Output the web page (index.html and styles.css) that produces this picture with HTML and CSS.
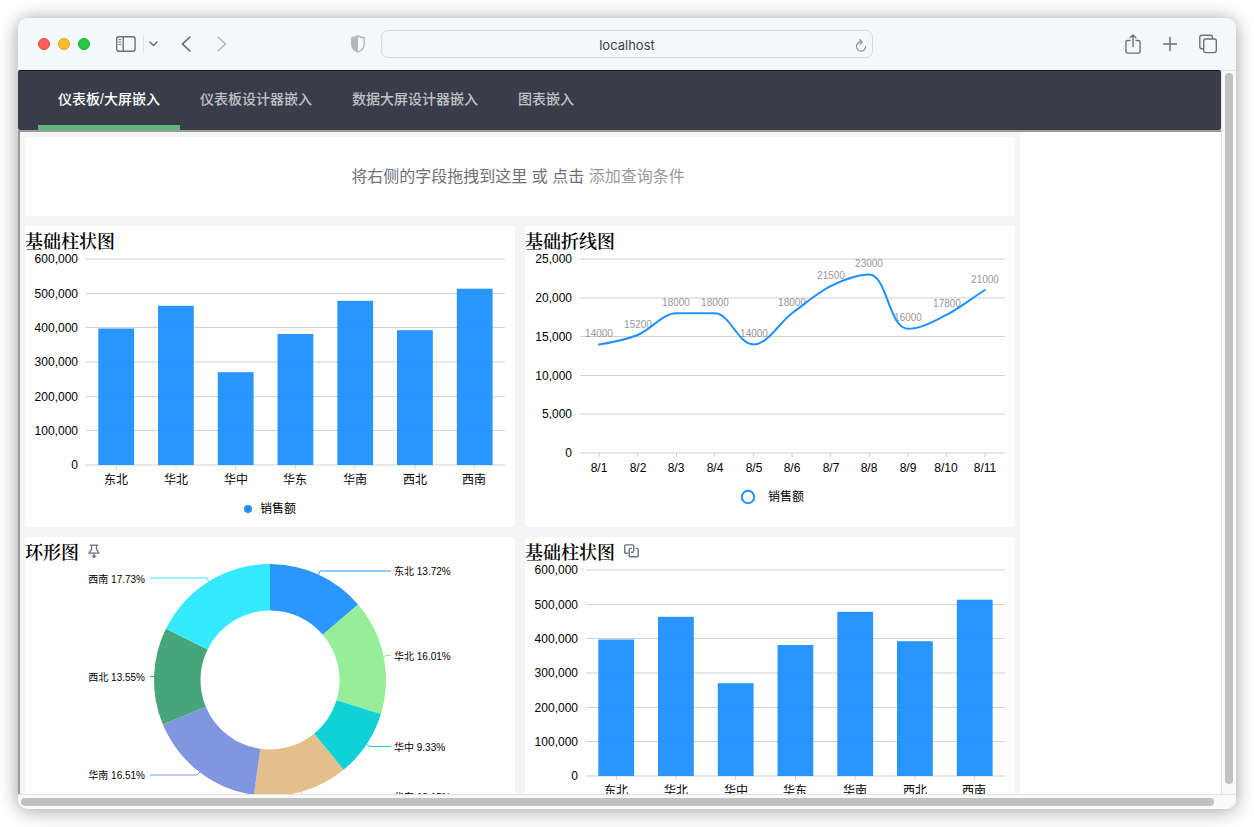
FILE: index.html
```html
<!DOCTYPE html>
<html lang="zh-CN">
<head>
<meta charset="utf-8">
<title>仪表板/大屏嵌入</title>
<link rel="stylesheet" href="styles.css">
</head>
<body>
<div class="window">
  <header class="toolbar">
    <div class="tools tools-left">
      <div class="lights"><span class="light red"></span><span class="light yellow"></span><span class="light green"></span></div>
      <button class="tool sidebar" aria-label="Sidebar"><svg width="20" height="18" viewBox="0 0 20 18"><g fill="none" stroke="#6c7074" stroke-width="1.4"><rect x="0.7" y="1.7" width="18.4" height="14.6" rx="2.2"/><path d="M7.2 2v14"/><path d="M2.6 4.6h2.6M2.6 7h2.6M2.6 9.4h2.6" stroke-width="1"/></g></svg></button>
      <span class="divider"></span>
      <button class="tool menu" aria-label="Tab groups"><svg width="9" height="6" viewBox="0 0 9 6"><path d="M1 1l3.5 3.5L8 1" fill="none" stroke="#6c7074" stroke-width="1.5" stroke-linecap="round" stroke-linejoin="round"/></svg></button>
      <button class="tool back" aria-label="Back"><svg width="10" height="16" viewBox="0 0 10 16"><path d="M9 1L1.4 8L9 15" fill="none" stroke="#5f6367" stroke-width="1.6" stroke-linecap="round" stroke-linejoin="round"/></svg></button>
      <button class="tool forward" aria-label="Forward"><svg width="10" height="16" viewBox="0 0 10 16"><path d="M1 1l7.6 7L1 15" fill="none" stroke="#b4b8bb" stroke-width="1.6" stroke-linecap="round" stroke-linejoin="round"/></svg></button>
      <button class="tool shield" aria-label="Privacy report"><svg width="14" height="18" viewBox="0 0 14 18"><path d="M7 .8C5.2 2 3 2.7.8 2.8V10c0 3.400 2.800 5.600 6.200 7.200C10.400 15.600 13.200 13.400 13.200 10V2.800C11 2.700 8.800 2 7 .8z" fill="none" stroke="#b2b7ba" stroke-width="1.4" stroke-linejoin="round"/><path d="M7 .8C5.200 2 3 2.700.8 2.800V10c0 3.400 2.800 5.600 6.200 7.200z" fill="#b2b7ba"/></svg></button>
    </div>
    <div class="address">
      <input class="url" type="text" aria-label="Address" value="localhost">
      <button class="tool reload" aria-label="Reload"><svg width="12" height="13" viewBox="0 0 12 13"><path d="M6.400 2.900A4.600 4.600 0 1 0 10.600 7.400" fill="none" stroke="#8f9396" stroke-width="1.2" stroke-linecap="round"/><path d="M4.700.7l2.500 2.300l-2.300 2.300" fill="none" stroke="#8f9396" stroke-width="1.200" stroke-linecap="round" stroke-linejoin="round"/></svg></button>
    </div>
    <div class="tools tools-right">
      <button class="tool" aria-label="Share"><svg width="16" height="20" viewBox="0 0 16 20"><g fill="none" stroke="#6c7074" stroke-width="1.400" stroke-linecap="round" stroke-linejoin="round"><path d="M5 6.500H2.500a1.600 1.600 0 0 0-1.600 1.600V17.500a1.600 1.600 0 0 0 1.600 1.600h11a1.600 1.600 0 0 0 1.600-1.600V8.100a1.600 1.600 0 0 0-1.600-1.600H11"/><path d="M8 12.500V1M5.200 3.700L8 .9l2.800 2.800"/></g></svg></button>
      <button class="tool" aria-label="New tab"><svg width="14" height="16" viewBox="0 0 14 16"><path d="M7 1.500v13M.5 8h13" fill="none" stroke="#66706f" stroke-width="1.500" stroke-linecap="round"/></svg></button>
      <button class="tool" aria-label="Tab overview"><svg width="18" height="20" viewBox="0 0 18 20"><g fill="none" stroke="#6c7074" stroke-width="1.400"><path d="M4.200 14.800H2.800a2 2 0 0 1-2-2V3.200a2 2 0 0 1 2-2h8.600a2 2 0 0 1 2 2v1.500"/><rect x="4.700" y="5" width="12.600" height="13.600" rx="2"/></g></svg></button>
    </div>
  </header>
  <main class="page">
    <nav class="nav">
      <a class="tab active" href="#dashboard">仪表板/大屏嵌入</a>
      <a class="tab" href="#designer">仪表板设计器嵌入</a>
      <a class="tab" href="#screen">数据大屏设计器嵌入</a>
      <a class="tab" href="#chart">图表嵌入</a>
    </nav>
    <div class="frame">
      <div class="board">
        <section class="card query">
          <p>将右侧的字段拖拽到这里 或 点击 <a class="add" href="#add">添加查询条件</a></p>
        </section>

        <section class="card">
          <h2 class="title">基础柱状图</h2>
          <svg class="chart" viewBox="0 0 490 273" role="img" aria-label="基础柱状图">
            <path class="grid" d="M61 5H480M61 39.500H480M61 73.500H480M61 108H480M61 142.500H480M61 176.500H480"/>
            <path class="axis" d="M61 211H480M91.500 211v4M151 211v4M210.500 211v4M270.500 211v4M330 211v4M390 211v4M449.500 211v4"/>
            <g class="bars">
              <rect x="73.300" y="74.500" width="35.800" height="136.500"/>
              <rect x="133" y="51.800" width="35.800" height="159.200"/>
              <rect x="192.800" y="118.200" width="35.800" height="92.800"/>
              <rect x="252.500" y="80" width="35.800" height="131"/>
              <rect x="312.300" y="46.800" width="35.800" height="164.200"/>
              <rect x="372" y="76.200" width="35.800" height="134.800"/>
              <rect x="431.800" y="34.700" width="35.800" height="176.300"/>
            </g>
            <g class="label end">
              <text x="53" y="9">600,000</text><text x="53" y="44">500,000</text><text x="53" y="78">400,000</text><text x="53" y="112">300,000</text><text x="53" y="147">200,000</text><text x="53" y="181">100,000</text><text x="53" y="215">0</text>
            </g>
            <g class="label mid">
              <text x="91" y="230">东北</text><text x="151" y="230">华北</text><text x="211" y="230">华中</text><text x="270" y="230">华东</text><text x="330" y="230">华南</text><text x="390" y="230">西北</text><text x="449" y="230">西南</text>
            </g>
            <circle cx="223" cy="255" r="4" fill="#1e90ff"/>
            <text class="label" x="235" y="259">销售额</text>
          </svg>
        </section>

        <section class="card">
          <h2 class="title">基础折线图</h2>
          <svg class="chart" viewBox="0 0 490 273" role="img" aria-label="基础折线图">
            <path class="grid" d="M55 5H480M55 44H480M55 82.500H480M55 121.500H480M55 160H480"/>
            <path class="axis" d="M55 199H480M74 199v4M112.500 199v4M151.500 199v4M189.500 199v4M228.500 199v4M267 199v4M305.500 199v4M344.500 199v4M383 199v4M421.500 199v4M460 199v4"/>
            <g class="value mid">
              <text x="74" y="83">14000</text><text x="113" y="74">15200</text><text x="151" y="52">18000</text><text x="190" y="52">18000</text><text x="229" y="83">14000</text><text x="267" y="52">18000</text><text x="306" y="25">21500</text><text x="344" y="13">23000</text><text x="383" y="67">16000</text><text x="422" y="53">17800</text><text x="460" y="29">21000</text>
            </g>
            <path class="line" d="M74 90.400C87 88.500 99.600 86.200 112.600 81C125.600 75.800 138 59.300 151.200 59.300L189.800 59.300C205 59.300 213 90.400 228.400 90.400C243 90.400 254 69 267 59.300C280 49.600 292.600 38.700 305.600 32.200C318.600 25.700 331 20.500 344.200 20.500C362 20.500 364 74.800 382.800 74.800C396 74.800 408.400 67.400 421.400 60.900C434.400 54.400 447 44 460 36"/>
            <g class="label end">
              <text x="47" y="9">25,000</text><text x="47" y="48">20,000</text><text x="47" y="87">15,000</text><text x="47" y="126">10,000</text><text x="47" y="164">5,000</text><text x="47" y="203">0</text>
            </g>
            <g class="label mid">
              <text x="74" y="218">8/1</text><text x="113" y="218">8/2</text><text x="151" y="218">8/3</text><text x="190" y="218">8/4</text><text x="229" y="218">8/5</text><text x="267" y="218">8/6</text><text x="306" y="218">8/7</text><text x="344" y="218">8/8</text><text x="383" y="218">8/9</text><text x="421" y="218">8/10</text><text x="460" y="218">8/11</text>
            </g>
            <circle cx="223" cy="243" r="6.200" fill="#fff" stroke="#1e90ff" stroke-width="2"/>
            <text class="label" x="243" y="247">销售额</text>
          </svg>
        </section>

        <section class="card">
          <h2 class="title">环形图
            <svg width="12" height="15" viewBox="0 0 12 15"><g fill="none" stroke="#6b7280" stroke-width="1.300" stroke-linejoin="round"><path d="M1.600 1.200h8.800"/><path d="M3.600 1.400V5.200L1 9.200h10L8.400 5.200V1.400"/><path d="M6 9.200v3.200"/></g><path d="M3.200 11.600h5.600L6 14.600z" fill="#6b7280"/></svg>
          </h2>
          <svg class="chart" viewBox="0 0 490 273" role="img" aria-label="环形图">
            <path fill="#2a96ff" d="M245-1A116 116 0 0 1 333.060 39.500L297.800 69.800A69.500 69.500 0 0 0 245 45.500z"/>
            <path fill="#96ee98" d="M333.060 39.500A116 116 0 0 1 355.900 149L311.500 135.300A69.500 69.500 0 0 0 297.800 69.800z"/>
            <path fill="#10d2d6" d="M355.900 149A116 116 0 0 1 318.600 204.700L289.100 168.700A69.500 69.500 0 0 0 311.500 135.300z"/>
            <path fill="#e3c08b" d="M318.600 204.700A116 116 0 0 1 228.900 229.900L235.400 183.800A69.500 69.500 0 0 0 289.100 168.700z"/>
            <path fill="#8096e1" d="M228.900 229.900A116 116 0 0 1 137.900 159.600L180.800 141.700A69.500 69.500 0 0 0 235.400 183.800z"/>
            <path fill="#46a67a" d="M137.900 159.600A116 116 0 0 1 140.900 63.800L182.600 84.400A69.500 69.500 0 0 0 180.800 141.700z"/>
            <path fill="#35e9ff" d="M140.900 63.800A116 116 0 0 1 245-1V45.500A69.500 69.500 0 0 0 182.600 84.400z"/>
            <g fill="none" stroke-width="1">
              <path stroke="#2a96ff" d="M293.500 9.500L295 6H366"/>
              <path stroke="#96ee98" d="M358.500 92L361 90.500H366"/>
              <path stroke="#10d2d6" d="M341.500 179L344.500 181.500H366"/>
              <path stroke="#e3c08b" d="M276 226L277 232H366"/>
              <path stroke="#8096e1" d="M175 207L172 210H125"/>
              <path stroke="#46a67a" d="M129.500 111.500H125"/>
              <path stroke="#35e9ff" d="M184 17L182 13H125"/>
            </g>
            <g class="slice">
              <text x="369" y="10">东北 13.72%</text><text x="369" y="95">华北 16.01%</text><text x="369" y="186">华中 9.33%</text><text x="369" y="236">华东 13.15%</text>
            </g>
            <g class="slice end">
              <text x="120" y="214">华南 16.51%</text><text x="120" y="116">西北 13.55%</text><text x="120" y="18">西南 17.73%</text>
            </g>
          </svg>
        </section>

        <section class="card">
          <h2 class="title">基础柱状图
            <svg width="15" height="14" viewBox="0 0 15 14"><g fill="none" stroke="#6b7280" stroke-width="1.400" stroke-linejoin="round"><path d="M4.200 9.300H1.700a1 1 0 0 1-1-1V1.900a1 1 0 0 1 1-1h7a1 1 0 0 1 1 1V7.300a1 1 0 0 1-1 1H7"/><path d="M8 4.400H6.200a1 1 0 0 0-1 1V11.700a1 1 0 0 0 1 1h7a1 1 0 0 0 1-1V5.400a1 1 0 0 0-1-1H11.500"/></g></svg>
          </h2>
          <svg class="chart" viewBox="0 0 490 273" role="img" aria-label="基础柱状图">
            <path class="grid" d="M61 5H480M61 39.500H480M61 73.500H480M61 108H480M61 142.500H480M61 176.500H480"/>
            <path class="axis" d="M61 211H480M91.500 211v4M151 211v4M210.500 211v4M270.500 211v4M330 211v4M390 211v4M449.500 211v4"/>
            <g class="bars">
              <rect x="73.300" y="74.500" width="35.800" height="136.500"/>
              <rect x="133" y="51.800" width="35.800" height="159.200"/>
              <rect x="192.800" y="118.200" width="35.800" height="92.800"/>
              <rect x="252.500" y="80" width="35.800" height="131"/>
              <rect x="312.300" y="46.800" width="35.800" height="164.200"/>
              <rect x="372" y="76.200" width="35.800" height="134.800"/>
              <rect x="431.800" y="34.700" width="35.800" height="176.300"/>
            </g>
            <g class="label end">
              <text x="53" y="9">600,000</text><text x="53" y="44">500,000</text><text x="53" y="78">400,000</text><text x="53" y="112">300,000</text><text x="53" y="147">200,000</text><text x="53" y="181">100,000</text><text x="53" y="215">0</text>
            </g>
            <g class="label mid">
              <text x="91" y="230">东北</text><text x="151" y="230">华北</text><text x="211" y="230">华中</text><text x="270" y="230">华东</text><text x="330" y="230">华南</text><text x="390" y="230">西北</text><text x="449" y="230">西南</text>
            </g>
          </svg>
        </section>
      </div>
    </div>
  </main>
  <div class="track vertical"><div class="thumb"></div></div>
  <div class="track horizontal"><div class="thumb"></div></div>
</div>
</body>
</html>
```

FILE: styles.css
```css
* {
  box-sizing: border-box;
}

body {
  margin: 0;
  height: 100vh;
  padding: 18px;
  background: #fff;
  font-family: "Liberation Sans", "Noto Sans CJK SC", sans-serif;
  overflow: hidden;
}

button {
  border: 0;
  padding: 0;
  background: none;
}

a {
  color: inherit;
  text-decoration: none;
}

.window {
  display: grid;
  grid-template: 52px minmax(0, 1fr) 15px / minmax(0, 1fr) 15px;
  height: 100%;
  border-radius: 10px;
  overflow: hidden;
  background: #fafafa;
  box-shadow: 0 0 18px rgba(0, 0, 0, 0.3), 0 6px 20px rgba(0, 0, 0, 0.1);
}

/* Browser toolbar */

.toolbar {
  grid-column: 1 / -1;
  display: grid;
  grid-template-columns: 1fr minmax(200px, 492px) 1fr;
  align-items: center;
  padding-bottom: 1px;
  background: #f3f8fb;
}

.tools {
  display: flex;
  align-items: center;
}

.tools-left {
  padding-left: 20px;
}

.tools-right {
  justify-content: flex-end;
  gap: 22px;
  padding-right: 19px;
}

.tool {
  display: flex;
}

.lights {
  display: flex;
  gap: 8px;
}

.light {
  width: 12px;
  height: 12px;
  border: 1px solid;
  border-radius: 50%;
}

.red {
  background: #ff5f57;
  border-color: #e2463f;
}

.yellow {
  background: #febc2e;
  border-color: #e0a023;
}

.green {
  background: #28c840;
  border-color: #1aab2c;
}

.sidebar {
  margin-left: 26px;
}

.divider {
  width: 1px;
  height: 18px;
  margin: 0 5px 0 7px;
  background: #e1e5e8;
}

.back {
  margin-left: 23px;
}

.forward {
  margin-left: 26px;
}

.shield {
  margin: 0 16px 0 auto;
}

.address {
  position: relative;
  display: flex;
}

.url {
  flex: 1;
  min-width: 0;
  height: 28px;
  margin: 0;
  padding: 2px 24px 0;
  border: 1px solid #d5dadd;
  border-radius: 7px;
  background: transparent;
  color: #3e4144;
  font: 13px Inter, sans-serif;
  text-align: center;
}

.reload {
  position: absolute;
  right: 6px;
  top: 9px;
}

/* Page */

.page {
  display: flex;
  flex-direction: column;
  background: #fff;
}

.nav {
  flex: none;
  display: flex;
  height: 60px;
  padding: 0 20px;
  border-top: 1px solid #131624;
  border-radius: 2px;
  background: #393d49;
}

.tab {
  padding: 0 20px;
  border-bottom: 5px solid transparent;
  color: rgba(255, 255, 255, 0.7);
  font: 500 14px/56px "Liberation Sans", "Noto Sans CJK SC", sans-serif;
}

.tab.active {
  border-color: #5fb878;
  color: #fff;
}

.frame {
  flex: 1;
  min-height: 0;
  border: solid #9a9a9a;
  border-width: 2px 0 0 2px;
  overflow: hidden;
}

.board {
  display: grid;
  grid-template-columns: 1fr 1fr;
  gap: 10px;
  max-width: 1000px;
  padding: 5px;
  background: #f4f5f7;
}

.card {
  min-width: 0;
  background: #fff;
}

.query {
  grid-column: 1 / -1;
  padding: 28px 4px 27px 0;
  color: #6b707a;
  font-size: 16px;
  line-height: 24px;
  text-align: center;
}

.query p {
  margin: 0;
}

.add {
  color: #989ba3;
}

.title {
  display: flex;
  align-items: center;
  gap: 9px;
  height: 28px;
  margin: 0;
  color: #000;
  font: 600 18px/26px "Noto Serif CJK SC", "Noto Sans CJK SC", serif;
}

/* Charts */

.chart {
  display: block;
  width: 100%;
  overflow: visible;
}

.grid,
.axis {
  fill: none;
  stroke: #d0d0d0;
}

.bars {
  fill: #1e90ff;
  fill-opacity: 0.95;
}

.line {
  fill: none;
  stroke: #1e90ff;
  stroke-width: 2;
  stroke-linecap: round;
}

.label {
  fill: #000;
  font-size: 12px;
}

.value {
  fill: #96989c;
  font-size: 10px;
}

.slice {
  fill: #000;
  font-size: 10px;
}

.mid {
  text-anchor: middle;
}

.end {
  text-anchor: end;
}

/* Scrollbars */

.track {
  background: #fafafa;
}

.thumb {
  border-radius: 4px;
  background: #c1c1c1;
}

.vertical {
  display: flex;
  padding: 2px 3px 10px;
  border: solid #e4e4e4;
  border-width: 1px 0 0 1px;
}

.vertical .thumb {
  flex: 1;
}

.horizontal {
  grid-column: 1 / -1;
  padding: 3px 22px 3px 3px;
  border-top: 1px solid #e4e4e4;
}

.horizontal .thumb {
  height: 8px;
}
```
